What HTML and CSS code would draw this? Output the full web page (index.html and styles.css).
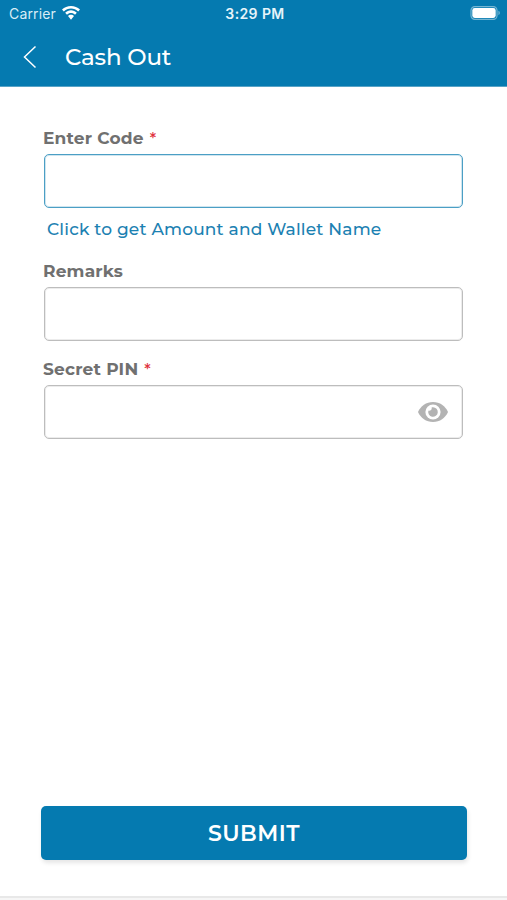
FILE: index.html
```html
<!DOCTYPE html>
<html lang="en">
<head>
<meta charset="UTF-8">
<meta name="viewport" content="width=device-width, initial-scale=1.0">
<title>Cash Out</title>
<link rel="stylesheet" href="styles.css">
</head>
<body>
  <header class="header">
    <div class="status-bar">
      <div class="carrier">
        <span>Carrier</span>
        <svg class="wifi" width="18" height="14" viewBox="0 0 18 14" fill="#fff">
          <path d="M9 0C5.600 0 2.400 1.300 0 3.600l1.800 1.900C3.700 3.700 6.300 2.600 9 2.600s5.300 1.100 7.200 2.900L18 3.600C15.600 1.300 12.400 0 9 0z"/>
          <path d="M9 4.300c-2.200 0-4.300.9-5.800 2.400L5 8.700C6 7.700 7.500 7.100 9 7.100s3 .6 4 1.600l1.800-2C13.300 5.200 11.200 4.300 9 4.300z"/>
          <path d="M9 8.800c-1.100 0-2.200.5-3 1.300l3 3.600 3-3.600c-.8-.8-1.900-1.300-3-1.300z"/>
        </svg>
      </div>
      <div class="time">3:29 PM</div>
      <svg class="battery" width="31" height="14" viewBox="0 0 31 14">
        <rect x="1" y=".6" width="26" height="12.800" rx="3.800" fill="none" stroke="#fff" stroke-opacity=".45" stroke-width="1.200"/>
        <rect x="2.300" y="2" width="23.400" height="10" rx="2.400" fill="#fff"/>
        <path d="M28.500 4.800c1.600.6 1.600 3.800 0 4.400z" fill="#fff" fill-opacity=".5"/>
      </svg>
    </div>
    <div class="nav-bar">
      <svg class="back" width="14" height="24" viewBox="0 0 14 24" fill="none" stroke="#fff" stroke-width="1.500">
        <path d="M12.500 1.500L1.500 12l11 10.500"/>
      </svg>
      <h1>Cash Out</h1>
    </div>
  </header>

  <form class="form">
    <label class="label" for="code">Enter Code <span class="required">*</span></label>
    <input class="input input-active" type="text" id="code">
    <a class="link">Click to get Amount and Wallet Name</a>

    <label class="label" for="remarks">Remarks</label>
    <input class="input" type="text" id="remarks">

    <label class="label label-pin" for="pin">Secret PIN <span class="required">*</span></label>
    <div class="input input-pin">
      <input class="pin-field" type="password" id="pin">
      <svg class="eye" width="30" height="20" viewBox="0 0 30 20">
        <path d="M15 0C8.200 0 2.600 4 0 10c2.600 6 8.200 10 15 10s12.400-4 15-10C27.400 4 21.800 0 15 0z" fill="#b3b3b3"/>
        <circle cx="15" cy="10" r="7.600" fill="#fff"/>
        <path d="M15 5.200a4.800 4.800 0 1 1-4.600 3.400 2.500 2.500 0 0 0 3.200-3.200c.5-.1.900-.2 1.400-.2z" fill="#b3b3b3"/>
      </svg>
    </div>

    <button class="submit" type="button">SUBMIT</button>
  </form>

  <footer class="bottom-bar"></footer>
</body>
</html>
```

FILE: styles.css
```css
* {
  box-sizing: border-box;
}
body {
  margin: 0;
  height: 900px;
  display: flex;
  flex-direction: column;
  overflow: hidden;
  background-color: #fff;
  font-family: Montserrat, Inter, sans-serif;
}
.header {
  height: 87px;
  background-color: #057ab0;
  border-bottom: 1px solid #58a3c6;
  color: #fff;
}
.status-bar {
  display: grid;
  grid-template-columns: 1fr auto 1fr;
  align-items: center;
  height: 27px;
  padding: 0 6px 0 9px;
  font-family: Inter, sans-serif;
  font-size: 14px;
}
.carrier {
  display: flex;
  align-items: center;
  gap: 6px;
  color: #d9edf6;
  letter-spacing: 0.15px;
}
.wifi {
  margin-top: -1px;
}
.time {
  font-weight: 600;
  letter-spacing: 0.4px;
  color: #e6f4fa;
}
.battery {
  justify-self: end;
  margin-top: -1px;
}
.nav-bar {
  display: flex;
  align-items: center;
  height: 59px;
  padding-left: 23px;
}
h1 {
  margin: 0 0 0 28px;
  font-size: 23px;
  font-weight: 500;
  letter-spacing: -0.2px;
}
.form {
  flex: 1;
  display: flex;
  flex-direction: column;
  padding: 40px 40px 36px;
}
.label {
  height: 27px;
  margin-left: 3px;
  line-height: 23px;
  font-size: 17px;
  font-weight: 700;
  letter-spacing: 0.2px;
  color: #707070;
}
.required {
  margin-left: 1px;
  font-size: 16px;
  font-weight: 500;
  color: #e0303c;
}
.input {
  height: 54px;
  flex-shrink: 0;
  margin: 0 4px;
  border: 1px solid #bdbdbd;
  border-radius: 5px;
  background-color: #fff;
  box-shadow: inset 0 0 0 1px #ececec;
  outline: none;
  font: inherit;
}
.input-active {
  border-color: #4b9fc5;
  box-shadow: inset 0 0 0 1px #cfe5ef;
}
.link {
  margin: 10px 0 0 7px;
  height: 42px;
  line-height: 23px;
  font-size: 17px;
  font-weight: 500;
  letter-spacing: 0.18px;
  color: #1c81b2;
}
.label-pin {
  margin-top: 17px;
}
.input-pin {
  display: flex;
  align-items: center;
  padding: 0 14px;
}
.pin-field {
  flex: 1;
  min-width: 0;
  border: none;
  outline: none;
}
.submit {
  height: 54px;
  margin: auto 0 0 1px;
  border: none;
  border-radius: 5px;
  background-color: #057ab0;
  box-shadow: 1px 3px 4px rgba(0, 0, 0, 0.1);
  color: #fff;
  font-family: inherit;
  font-size: 22px;
  font-weight: 600;
  letter-spacing: 0.5px;
}
.bottom-bar {
  height: 4px;
  border-top: 2px solid #e8e8e8;
  background-color: #f6f6f6;
}
```
